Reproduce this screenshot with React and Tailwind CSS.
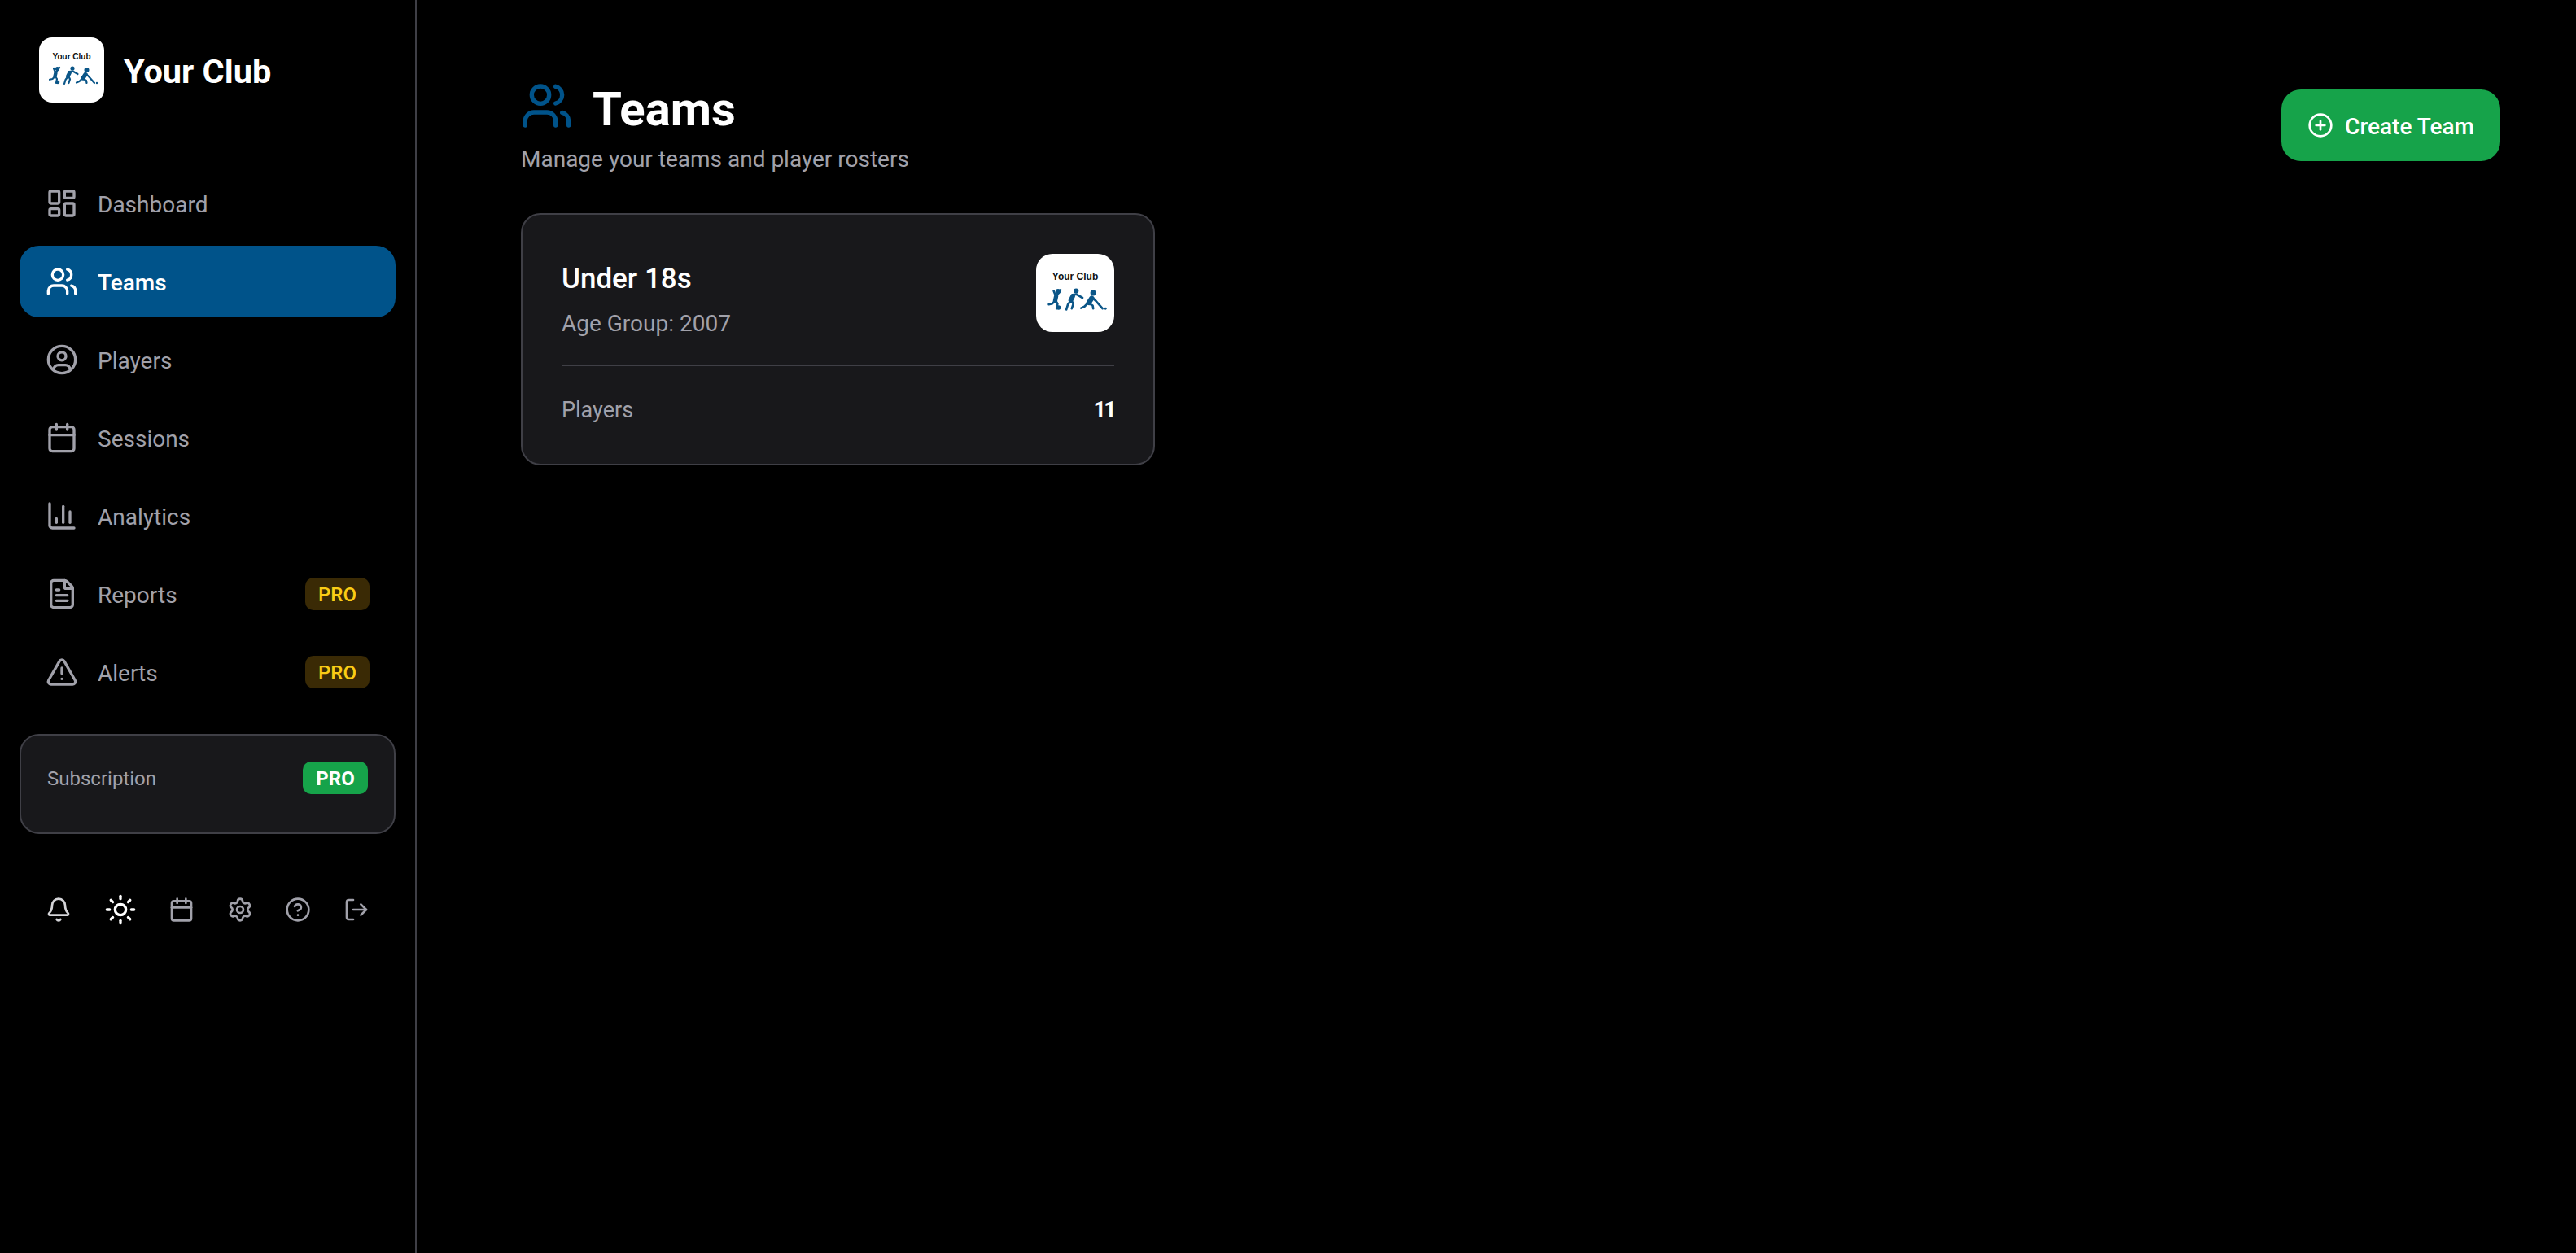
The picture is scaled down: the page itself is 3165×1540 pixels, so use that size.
import React from "react";
import {
  Bell,
  Calendar,
  ChartColumn,
  CircleHelp,
  CirclePlus,
  FileText,
  LayoutDashboard,
  LogOut,
  Settings,
  Sun,
  TriangleAlert,
  Users,
} from "lucide-react";

const PlayersIcon = ({ className }) => (
  <svg
    className={className}
    viewBox="0 0 24 24"
    fill="none"
    stroke="currentColor"
    strokeWidth="2"
    strokeLinecap="round"
    strokeLinejoin="round"
  >
    <circle cx="12" cy="12" r="10" />
    <circle cx="12" cy="9.5" r="3" />
    <path d="M5.6 19.5c.7-2.4 2-3.5 3.8-3.5h5.2c1.8 0 3.1 1.1 3.8 3.5" />
  </svg>
);

const ClubLogo = ({ className }) => (
  <div className={className}>
    <svg className="w-full h-full" viewBox="0 0 80 80">
      <text
        x="40"
        y="27"
        textAnchor="middle"
        fontSize="10"
        fontWeight="700"
        fontFamily="Liberation Sans, sans-serif"
        fill="#111"
      >
        Your Club
      </text>
      <g fill="#0b5688">
        <circle cx="22.5" cy="38.5" r="2.6" />
        <circle cx="41" cy="38" r="2.6" />
        <circle cx="58.5" cy="40" r="3" />
        <circle cx="23" cy="55" r="2.3" />
        <circle cx="71" cy="56" r="1.2" />
      </g>
      <g stroke="#0b5688" fill="none" strokeLinecap="round" strokeLinejoin="round">
        {/* kicker */}
        <path strokeWidth="4.4" d="M20.5 43.5l-1 4.5" />
        <path strokeWidth="2.2" d="M21 43l4-6M20 43l-2-5M19.5 48l-3 3-3.5 .8M20 48l2 3-1 5" />
        {/* runner */}
        <path strokeWidth="4.8" d="M37.5 43.5l-2 4" />
        <path strokeWidth="2.2" d="M37 42l4.5-.5 6 3.5M35.5 48l-3 4-1.5 5M36.5 48l1.5 3.5-1.5 4.5" />
        {/* stick player */}
        <path strokeWidth="5.2" d="M57 45.5l-3 4.5" />
        <path strokeWidth="2.2" d="M58 45l3.5 3.5M61 48l7 8M53.5 50l-4 4-3.5 1.5M54.5 51l3.5 2 .5 3" />
      </g>
    </svg>
  </div>
);

const navItems = [
  { label: "Dashboard", icon: LayoutDashboard },
  { label: "Teams", icon: Users, active: true },
  { label: "Players", icon: PlayersIcon },
  { label: "Sessions", icon: Calendar },
  { label: "Analytics", icon: ChartColumn },
  { label: "Reports", icon: FileText, pro: true },
  { label: "Alerts", icon: TriangleAlert, pro: true },
];

export default function App() {
  return (
    <div className="flex min-h-screen bg-black font-['Roboto',sans-serif] text-white">
      <aside className="w-[512px] shrink-0 border-r-2 border-[#3f3f46]">
        <div className="flex items-center gap-6 pl-12 pt-[46px]">
          <ClubLogo className="w-20 h-20 bg-white rounded-2xl overflow-hidden" />
          <span className="text-[41.5px] leading-[48px] font-bold pt-[3px]">Your Club</span>
        </div>

        <nav className="flex flex-col gap-2 px-6 mt-20">
          {navItems.map((item) => {
            const Icon = item.icon;
            return (
              <div
                key={item.label}
                className={
                  item.active
                    ? "flex items-center gap-6 h-[88px] px-8 rounded-3xl bg-[#00538a] text-white font-medium"
                    : "flex items-center gap-6 h-[88px] px-8 rounded-3xl text-[#a1a1aa] font-[450]"
                }
              >
                <Icon className="w-10 h-10" />
                <span className="text-[28px] flex-1 pt-[3px]">{item.label}</span>
                {item.pro && (
                  <span className="flex items-center justify-center w-[79px] h-10 rounded-[10px] bg-[#3a2a05] text-[#facc15] text-[24px] font-medium pt-[2px]">
                    PRO
                  </span>
                )}
              </div>
            );
          })}
        </nav>

        <div className="mx-6 mt-8 pt-8 pb-[47px] pl-8 pr-8 flex items-center justify-between rounded-3xl border-2 border-[#3f3f46] bg-[#18181b]">
          <span className="text-[24px] text-[#a1a1aa] pt-[2px]">Subscription</span>
          <span className="flex items-center justify-center w-20 h-10 rounded-[10px] bg-[#16a34a] text-[24px] font-bold pt-[2px]">
            PRO
          </span>
        </div>

        <div className="flex items-center justify-between px-14 mt-[73px] text-[#a1a1aa]">
          <Bell className="w-8 h-8 text-[#d4d4d8]" />
          <Sun className="w-10 h-10 text-white" />
          <Calendar className="w-8 h-8" />
          <Settings className="w-8 h-8" />
          <CircleHelp className="w-8 h-8" />
          <LogOut className="w-8 h-8" />
        </div>
      </aside>

      <main className="flex-1 pl-32 pr-[93px] pt-[98px]">
        <div className="flex items-start justify-between">
          <div>
            <div className="flex items-center gap-6 h-16">
              <Users className="w-16 h-16 text-[#00538a]" />
              <h1 className="text-[58px] leading-none font-bold pt-[7px]">Teams</h1>
            </div>
            <p className="mt-[14px] text-[28px] leading-10 text-[#a1a1aa]">
              Manage your teams and player rosters
            </p>
          </div>
          <button className="flex items-center gap-[14px] h-[88px] pl-8 pr-8 mt-3 rounded-3xl bg-[#16a34a] text-[28px] font-medium">
            <CirclePlus className="w-8 h-8" />
            <span className="pt-[3px]">Create Team</span>
          </button>
        </div>

        <div className="w-[779px] h-[310px] mt-[46px] p-12 rounded-3xl border-2 border-[#3f3f46] bg-[#18181b]">
          <div className="flex items-start justify-between">
            <div>
              <h2 className="mt-[5px] text-[35px] leading-[52px] font-medium">Under 18s</h2>
              <p className="mt-[9px] text-[28px] leading-10 text-[#a1a1aa]">Age Group: 2007</p>
            </div>
            <ClubLogo className="w-24 h-24 bg-white rounded-[20px] overflow-hidden" />
          </div>
          <div className="mt-[30px] pt-[34px] border-t-2 border-[#3f3f46] flex items-center justify-between text-[27px] leading-10">
            <span className="text-[#a1a1aa]">Players</span>
            <span className="font-bold tracking-[-0.1em]">11</span>
          </div>
        </div>
      </main>
    </div>
  );
}
